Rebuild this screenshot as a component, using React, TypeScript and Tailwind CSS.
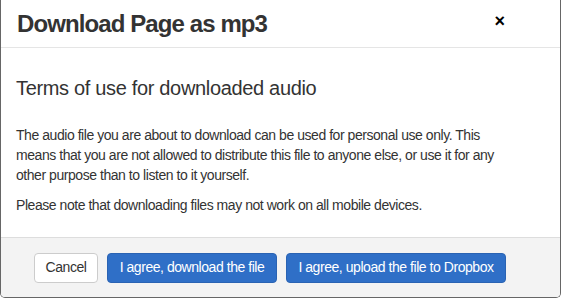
import React from "react";

export default function App() {
  return (
    <div className="w-[564px] h-[299px] bg-white overflow-hidden" style={{ fontFamily: '"Liberation Sans", Arial, sans-serif' }}>
      <div className="w-[561px] h-[298px] border-l border-r border-b border-[#666] rounded-b-[5px] flex flex-col overflow-hidden">
        <div className="h-[48px] shrink-0 border-b border-[#e5e5e5] flex items-center justify-between pl-[16px] pr-[55px]">
          <h1 className="text-[24px] font-bold text-[#333] leading-none tracking-[-0.9px] mt-[1px]">Download Page as mp3</h1>
          <span className="text-[18px] font-bold text-black leading-none -mt-[5px]">×</span>
        </div>
        <div className="flex-1 pl-[15px] pr-[55px] text-[#333]">
          <h2 className="text-[20px] leading-[22px] tracking-[-0.33px] mt-[29px] mb-[26px] text-[#333] whitespace-nowrap">Terms of use for downloaded audio</h2>
          <p className="text-[14px] leading-[20px] tracking-[-0.45px] mb-[10px]">
            The audio file you are about to download can be used for personal use only. This means that you are not allowed to distribute this file to anyone else, or use it for any other purpose than to listen to it yourself.
          </p>
          <p className="text-[14px] leading-[20px] tracking-[-0.45px]">Please note that downloading files may not work on all mobile devices.</p>
        </div>
        <div className="h-[60px] shrink-0 border-t border-[#ddd] bg-[#f3f3f3] flex items-center justify-end gap-[9px] pr-[54px] tracking-[-0.45px]">
          <button className="h-[30px] w-[64px] bg-white border border-[#ccc] rounded-[4px] text-[14px] text-[#333]">Cancel</button>
          <button className="h-[30px] w-[170px] bg-[#2f6fc7] border border-[#2a63b3] rounded-[4px] text-[14px] text-white">I agree, download the file</button>
          <button className="h-[30px] w-[220px] bg-[#2f6fc7] border border-[#2a63b3] rounded-[4px] text-[14px] text-white">I agree, upload the file to Dropbox</button>
        </div>
      </div>
    </div>
  );
}
